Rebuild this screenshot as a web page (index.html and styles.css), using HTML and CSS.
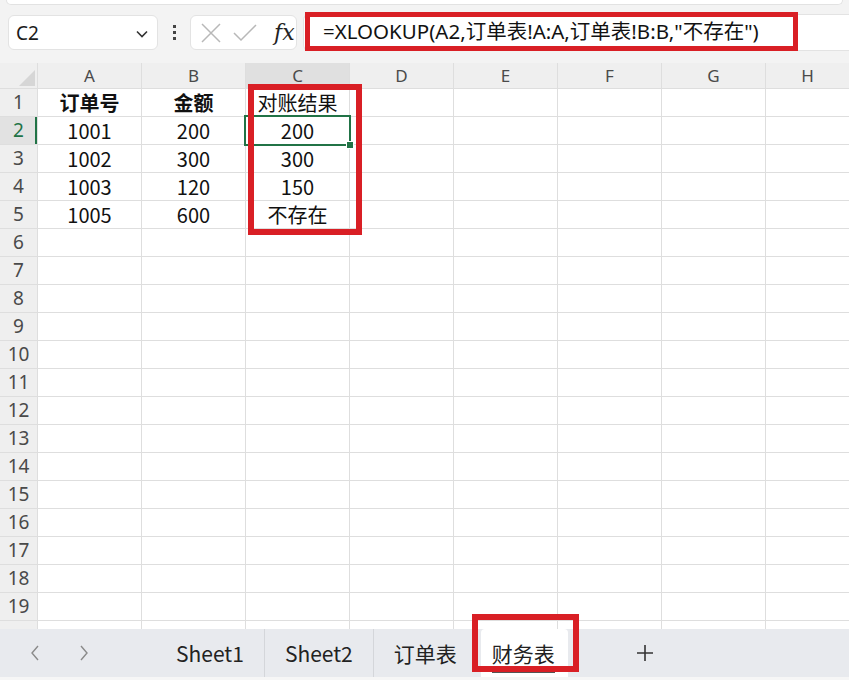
FILE: index.html
```html
<!DOCTYPE html>
<html>
<head>
<meta charset="UTF-8">
<title>财务表</title>
<link rel="stylesheet" href="styles.css">
</head>
<body>
<div class="topedge"></div>
<div class="toolbar">
  <div class="namebox">
    <span>C2</span>
    <svg class="chev" width="14" height="14" viewBox="0 0 14 14"><path d="M2 4.5 L7 9.5 L12 4.5" fill="none" stroke="#333" stroke-width="1.6"/></svg>
  </div>
  <div class="dots"><i></i><i></i><i></i></div>
  <div class="fbtns">
    <svg width="22" height="22" viewBox="0 0 22 22"><path d="M2 2 L20 20 M20 2 L2 20" stroke="#b8b8b8" stroke-width="1.5"/></svg>
    <svg width="26" height="22" viewBox="0 0 26 22"><path d="M2 11 L9 18 L24 3" fill="none" stroke="#b8b8b8" stroke-width="1.5"/></svg>
    <span class="fx">fx</span>
  </div>
  <div class="formula">
    <div class="mark">=XLOOKUP(A2,订单表!A:A,订单表!B:B,"不存在")</div>
  </div>
</div>

<div class="sheet">
  <div class="corner"><svg width="30" height="20" viewBox="0 0 30 20"><path d="M28 2 L28 18 L12 18 Z" fill="#d6d6d6"/></svg></div>
  <div class="ch">A</div><div class="ch">B</div><div class="ch sel">C</div><div class="ch">D</div><div class="ch">E</div><div class="ch">F</div><div class="ch">G</div><div class="ch">H</div>

  <div class="rh">1</div><div class="c b">订单号</div><div class="c b">金额</div><div class="c">对账结果</div><div class="c"></div><div class="c"></div><div class="c"></div><div class="c"></div><div class="c"></div>
  <div class="rh sel">2</div><div class="c">1001</div><div class="c">200</div><div class="c active">200<i class="handle"></i></div><div class="c"></div><div class="c"></div><div class="c"></div><div class="c"></div><div class="c"></div>
  <div class="rh">3</div><div class="c">1002</div><div class="c">300</div><div class="c">300</div><div class="c"></div><div class="c"></div><div class="c"></div><div class="c"></div><div class="c"></div>
  <div class="rh">4</div><div class="c">1003</div><div class="c">120</div><div class="c">150</div><div class="c"></div><div class="c"></div><div class="c"></div><div class="c"></div><div class="c"></div>
  <div class="rh">5</div><div class="c">1005</div><div class="c">600</div><div class="c">不存在</div><div class="c"></div><div class="c"></div><div class="c"></div><div class="c"></div><div class="c"></div>
  <div class="rh">6</div><div class="c"></div><div class="c"></div><div class="c"></div><div class="c"></div><div class="c"></div><div class="c"></div><div class="c"></div><div class="c"></div>
  <div class="rh">7</div><div class="c"></div><div class="c"></div><div class="c"></div><div class="c"></div><div class="c"></div><div class="c"></div><div class="c"></div><div class="c"></div>
  <div class="rh">8</div><div class="c"></div><div class="c"></div><div class="c"></div><div class="c"></div><div class="c"></div><div class="c"></div><div class="c"></div><div class="c"></div>
  <div class="rh">9</div><div class="c"></div><div class="c"></div><div class="c"></div><div class="c"></div><div class="c"></div><div class="c"></div><div class="c"></div><div class="c"></div>
  <div class="rh">10</div><div class="c"></div><div class="c"></div><div class="c"></div><div class="c"></div><div class="c"></div><div class="c"></div><div class="c"></div><div class="c"></div>
  <div class="rh">11</div><div class="c"></div><div class="c"></div><div class="c"></div><div class="c"></div><div class="c"></div><div class="c"></div><div class="c"></div><div class="c"></div>
  <div class="rh">12</div><div class="c"></div><div class="c"></div><div class="c"></div><div class="c"></div><div class="c"></div><div class="c"></div><div class="c"></div><div class="c"></div>
  <div class="rh">13</div><div class="c"></div><div class="c"></div><div class="c"></div><div class="c"></div><div class="c"></div><div class="c"></div><div class="c"></div><div class="c"></div>
  <div class="rh">14</div><div class="c"></div><div class="c"></div><div class="c"></div><div class="c"></div><div class="c"></div><div class="c"></div><div class="c"></div><div class="c"></div>
  <div class="rh">15</div><div class="c"></div><div class="c"></div><div class="c"></div><div class="c"></div><div class="c"></div><div class="c"></div><div class="c"></div><div class="c"></div>
  <div class="rh">16</div><div class="c"></div><div class="c"></div><div class="c"></div><div class="c"></div><div class="c"></div><div class="c"></div><div class="c"></div><div class="c"></div>
  <div class="rh">17</div><div class="c"></div><div class="c"></div><div class="c"></div><div class="c"></div><div class="c"></div><div class="c"></div><div class="c"></div><div class="c"></div>
  <div class="rh">18</div><div class="c"></div><div class="c"></div><div class="c"></div><div class="c"></div><div class="c"></div><div class="c"></div><div class="c"></div><div class="c"></div>
  <div class="rh">19</div><div class="c"></div><div class="c"></div><div class="c"></div><div class="c"></div><div class="c"></div><div class="c"></div><div class="c"></div><div class="c"></div>
  <div class="rh"></div><div class="c"></div><div class="c"></div><div class="c"></div><div class="c"></div><div class="c"></div><div class="c"></div><div class="c"></div><div class="c"></div>

  <div class="colmark"></div>
</div>

<div class="tabbar">
  <div class="navs">
    <svg width="12" height="18" viewBox="0 0 12 18"><path d="M9 2 L3 9 L9 16" fill="none" stroke="#8a8a8a" stroke-width="1.4"/></svg>
    <svg width="12" height="18" viewBox="0 0 12 18"><path d="M3 2 L9 9 L3 16" fill="none" stroke="#8a8a8a" stroke-width="1.4"/></svg>
  </div>
  <div class="tabs">
    <div class="tab">Sheet1</div>
    <div class="tab">Sheet2</div>
    <div class="tab">订单表</div>
    <div class="tab on">财务表<div class="tabmark"></div></div>
  </div>
  <svg class="plus" width="18" height="18" viewBox="0 0 18 18"><path d="M9 1 V17 M1 9 H17" stroke="#333" stroke-width="1.6"/></svg>
</div>
<div class="bottomedge"></div>
</body>
</html>
```

FILE: styles.css
```css
body {
	margin: 0;
	background: #f3f3f3;
	font-family: "Noto Sans", "Noto Sans CJK SC", sans-serif;
	color: #1a1a1a;
	width: 849px;
	height: 680px;
	overflow: hidden;
}
.topedge {
	height: 4px;
	margin: 0 6px;
	background: #fff;
	border: 1px solid #e2e2e2;
	border-top: 0;
	border-radius: 0 0 6px 6px;
}
.toolbar {
	display: flex;
	align-items: center;
	height: 35px;
	padding: 10px 0 12px 8px;
}
.namebox {
	width: 150px;
	height: 35px;
	box-sizing: border-box;
	background: #fff;
	border: 1px solid #e3e3e3;
	border-radius: 6px;
	display: flex;
	align-items: center;
	justify-content: space-between;
	padding: 0 8px 0 7px;
	font-size: 19px;
}
.chev {
	margin-top: 2px;
}
.dots {
	width: 32px;
	display: flex;
	flex-direction: column;
	align-items: center;
	gap: 3px;
}
.dots i {
	width: 3px;
	height: 3px;
	background: #444;
}
.fbtns {
	width: 107px;
	height: 35px;
	box-sizing: border-box;
	background: #fff;
	border: 1px solid #e3e3e3;
	border-radius: 6px;
	display: flex;
	align-items: center;
	gap: 10px;
	padding-left: 9px;
}
.fx {
	font-family: "DejaVu Serif", "Liberation Serif", serif;
	font-style: italic;
	font-size: 22px;
	margin-left: 6px;
	color: #222;
}
.formula {
	flex: 1;
	height: 35px;
	margin-left: 6px;
	background: #fff;
	border: 1px solid #e3e3e3;
	border-radius: 6px 0 0 6px;
	border-right: 0;
	position: relative;
}
.mark {
	position: absolute;
	left: 1px;
	top: -3px;
	width: 493px;
	height: 39px;
	box-sizing: border-box;
	border: 5px solid #d91f25;
	padding-left: 13px;
	font-size: 20.5px;
	line-height: 28px;
	white-space: nowrap;
	color: #111;
}
.sheet {
	display: grid;
	grid-template-columns: 37px repeat(7, 103px) 1fr;
	grid-template-rows: 25px repeat(20, 27px);
	gap: 1px;
	background: #dedede;
	height: 566px;
	overflow: hidden;
	position: relative;
	border-top: 1px solid #f3f3f3;
}
.corner {
	background: #efefef;
	display: flex;
	align-items: flex-end;
	justify-content: flex-end;
	overflow: hidden;
}
.ch {
	background: #efefef;
	text-align: center;
	font-size: 17px;
	line-height: 26px;
	color: #4a4a4a;
}
.ch.sel {
	background: #e0e0e0;
}
.rh {
	background: #efefef;
	font-size: 19px;
	line-height: 27px;
	text-align: center;
	color: #4a4a4a;
}
.rh.sel {
	background: #e2e2e2;
	color: #217346;
	box-shadow: inset -2px 0 0 #217346;
}
.c {
	background: #fff;
	text-align: center;
	font-size: 20px;
	line-height: 27px;
	color: #111;
	font-family: "Noto Sans CJK SC", sans-serif;
}
.c.b {
	font-weight: bold;
}
.active {
	position: relative;
	outline: 2px solid #217346;
	outline-offset: 0;
}
.handle {
	position: absolute;
	right: -5px;
	bottom: -5px;
	width: 6px;
	height: 6px;
	background: #217346;
	border: 1px solid #fff;
}
.colmark {
	position: absolute;
	left: 248px;
	top: 21px;
	width: 114px;
	height: 151px;
	box-sizing: border-box;
	border: 6px solid #d91f25;
}
.tabbar {
	height: 48px;
	background: #e8eaee;
	display: flex;
	align-items: flex-end;
	position: relative;
}
.navs {
	width: 156px;
	height: 48px;
	display: flex;
	align-items: center;
	gap: 37px;
	padding-left: 29px;
	box-sizing: border-box;
}
.tabs {
	display: flex;
	height: 48px;
	align-items: stretch;
}
.tab {
	font-family: "Noto Sans CJK SC", sans-serif;
	font-size: 21px;
	color: #222;
	padding: 0 20px;
	line-height: 48px;
	border-right: 1px solid #d4d6da;
	position: relative;
}
.tab:nth-child(3) {
	border-right: 0;
}
.tab.on {
	background: #fff;
	border-right: 0;
	padding: 0 13px 0 11px;
	margin-left: 4px;
	border-radius: 4px 4px 0 0;
}
.tabmark {
	position: absolute;
	left: 11px;
	right: 13px;
	bottom: 4px;
	height: 3px;
	background: #555;
}
.tab.on::after {
	content: "";
	position: absolute;
	left: -9px;
	top: -15px;
	width: 107px;
	height: 58px;
	box-sizing: border-box;
	border: 6px solid #d91f25;
}
.plus {
	margin-left: 68px;
	margin-bottom: 15px;
}
.bottomedge {
	height: 4px;
	background: #f6f6f6;
}
```
